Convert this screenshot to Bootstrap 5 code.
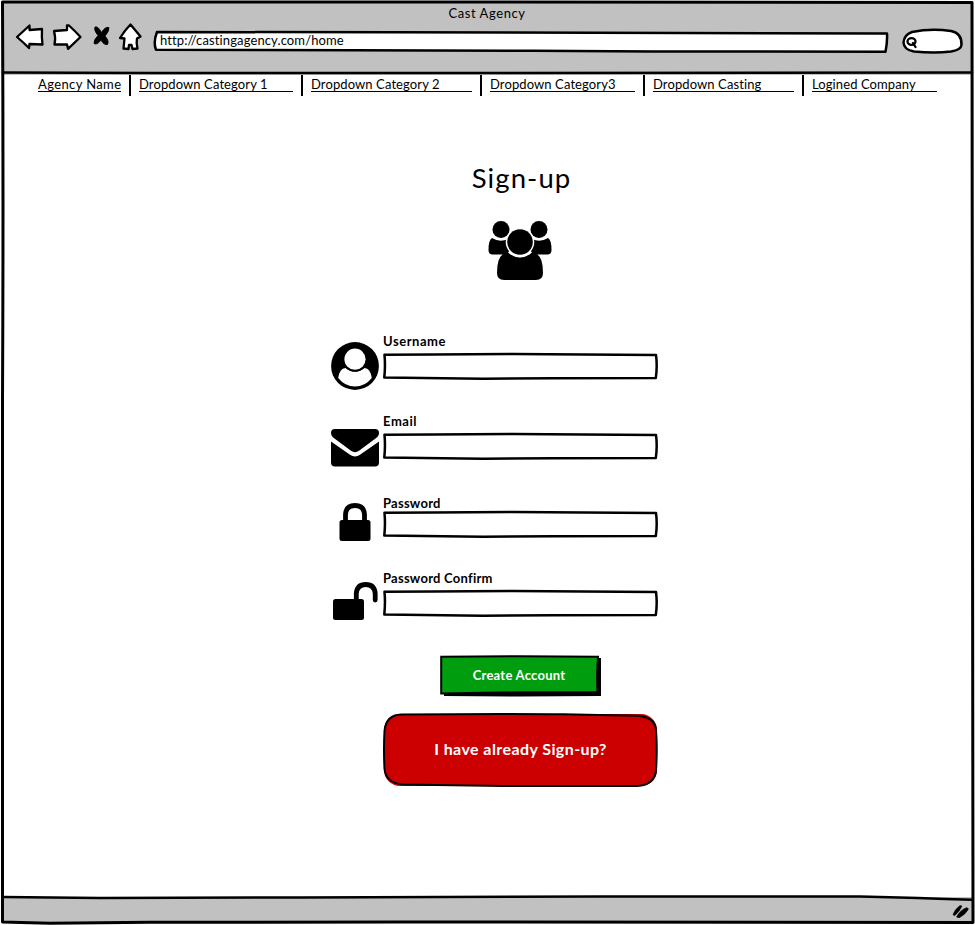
<!DOCTYPE html>
<html lang="en">
<head>
<meta charset="utf-8">
<meta name="viewport" content="width=device-width, initial-scale=1">
<title>Cast Agency</title>
<link href="https://cdn.jsdelivr.net/npm/bootstrap@5.3.0/dist/css/bootstrap.min.css" rel="stylesheet">
<style>
body{font-family:Lato,"Noto Sans",sans-serif;color:#000;font-size:13px;line-height:16px;background:#fff}
svg{display:block}
.window{width:975px;height:925px;overflow:hidden}
.frame{inset:0;pointer-events:none}
.outline{inset:0;width:100%;height:100%;pointer-events:none;overflow:visible}
.stroke-sketch{fill:none;stroke:#000;stroke-width:2.5;stroke-linejoin:round;stroke-linecap:round}
.stroke-sketch.filled{fill:#fff}
.chrome{height:73px;margin:2px 2px 0;background:#c1c1c1}
.chrome-title{height:23px;padding-top:3px;padding-right:1px;letter-spacing:.58px}
.chrome-tools{height:32px;padding-left:12px}
.toolbar-icons{margin-bottom:6px}
.address{width:735px;height:23px;margin-left:9px;padding:2px 0 0 7px;letter-spacing:.12px}
.search-pill{width:61px;height:26px;margin-left:14px}
.site-nav{height:22px;padding-left:38px}
.site-nav a{color:#000;height:17px;line-height:16px;padding-top:1px;border-bottom:1px solid #000;white-space:nowrap;letter-spacing:.1px}
.site-nav a.wide{letter-spacing:.38px}
.site-nav .sep{width:2px;height:21px;background:#000;margin:0 8px}
.content{width:327px;margin-left:331px;padding-top:63px}
.centered{padding-left:52px}
.page-title{font-size:27.5px;line-height:36px;letter-spacing:1.1px;font-weight:400;padding-left:2px}
.field-icon{width:48px;margin-right:4px}
.field-row{height:46px}
.field-label{height:19px;line-height:15px;font-weight:700;letter-spacing:.55px}
.field-label.tight{letter-spacing:.25px}
.field-box{width:275px;height:27px}
.field-box input{width:100%;height:100%;outline:0}
.btn-create{width:161px;height:42px;color:#fff;font-weight:700;font-size:13px;letter-spacing:.25px;padding:0 3px 2px 0}
.btn-have{width:275px;height:74px;color:#fff;font-weight:700;font-size:16px;letter-spacing:.42px;padding:0 0 2px}
.status{height:25px;background:#c1c1c1;margin:0 2px 3px}
</style>
</head>
<body>
<div class="window position-relative d-flex flex-column">
  <header class="chrome flex-shrink-0">
    <div class="chrome-title text-center">Cast Agency</div>
    <div class="chrome-tools d-flex align-items-center">
      <svg class="toolbar-icons" width="130" height="32" viewBox="14 22 130 32">
        <g fill="#fff" stroke="#000" stroke-width="2.3" stroke-linejoin="round">
          <path d="M17 37 L29.500 25.500 L29.500 30 L42 29 Q41.500 37 42.500 44.500 L29.500 44 L29 48 Q24 43 17 37Z"/>
          <path d="M54 31 L67 30 L67 25.500 L69 25.500 Q75 31 80.500 37 L68 48.800 L67 44.500 L54.500 44.500 Q56 38 54 31Z"/>
          <path d="M130.500 24.500 L140.500 36.500 L137 38.500 Q136 43 137.500 48.500 L132.500 49 L131.500 45 L129 45 L128.500 49 L123.500 48.500 L124.500 38.500 L120 38 Q125 30 130.500 24.500Z"/>
        </g>
        <path stroke="#000" stroke-width=".8" stroke-linejoin="round" d="M95 27 Q98 26 101.500 32.500 Q105 26.500 109 27.500 Q109.500 31 105 36 Q109.500 41 107.500 44.500 Q104 45.500 101 40 Q97 45.500 94 43.500 Q93.500 40 98 35.500 Q93.500 30 95 27Z"/>
      </svg>
      <div class="address position-relative">
        <svg class="outline position-absolute" viewBox="0 0 735 23" preserveAspectRatio="none"><path class="stroke-sketch filled" d="M4 2 L240 2.300 L734 3.500 Q734.500 12 732.500 21.700 L500 21.500 L380 20.700 L200 20.300 L3 19.700 Q0 12 4 2Z"/></svg>
        <span class="position-relative">http://castingagency.com/home</span>
      </div>
      <div class="search-pill position-relative">
        <svg class="outline position-absolute" viewBox="0 0 61 26"><path class="stroke-sketch filled" d="M10 4 Q29 0 49 3 Q60 5 59.500 17 Q59 22 49 23.500 Q33 25.500 12 23.500 Q2 22 1.500 14.500 Q2 7 10 4Z"/><g fill="none" stroke="#000" stroke-width="2.300" stroke-linecap="round"><ellipse cx="9.500" cy="13.500" rx="4" ry="3.300"/><path d="M11 15 L13.500 19"/></g></svg>
      </div>
    </div>
  </header>

  <nav class="site-nav d-flex flex-shrink-0">
    <a href="#" class="wide text-decoration-none" style="width:83px">Agency Name</a><span class="sep"></span>
    <a href="#" class="text-decoration-none" style="width:154px">Dropdown Category 1</a><span class="sep"></span>
    <a href="#" class="text-decoration-none" style="width:161px">Dropdown Category 2</a><span class="sep"></span>
    <a href="#" class="text-decoration-none" style="width:145px">Dropdown Category3</a><span class="sep"></span>
    <a href="#" class="text-decoration-none" style="width:141px">Dropdown Casting</a><span class="sep"></span>
    <a href="#" class="text-decoration-none" style="width:125px">Logined Company</a>
  </nav>

  <main class="content flex-grow-1">
    <div class="centered d-flex flex-column align-items-center">
      <h1 class="page-title m-0">Sign-up</h1>
      <svg width="66" height="60" viewBox="488 220 66 60" style="margin-top:24px">
        <circle cx="501" cy="229.500" r="8.500"/><circle cx="539" cy="229.500" r="8.500"/>
        <path d="M492 238 Q500 243 508 239 L512 246 L509 254.500 L492 254.500 Q488.500 254 488.500 250 Q488.500 240 492 238Z"/>
        <path d="M548 238 Q540 243 532 239 L528 246 L531 254.500 L548 254.500 Q551.500 254 551.500 250 Q551.500 240 548 238Z"/>
        <circle cx="520" cy="242" r="14.300" fill="#fff"/>
        <path d="M508 252.500 Q520 262 532 252.500 Q543 253 543 273 Q543 280 536 280 L504 280 Q497 280 497 273 Q497 253 508 252.500Z"/>
        <path d="M508 252.500 Q520 262.500 532 252.500 L529 249 L511 249Z" fill="#fff"/>
        <circle cx="520" cy="242" r="12.800"/>
      </svg>
    </div>

    <form>
      <div class="field-row d-flex align-items-start" style="margin-top:54px">
        <svg class="field-icon" style="margin-top:8px" height="48" viewBox="0 0 48 48"><circle cx="24" cy="24" r="23.900"/><path fill="#fff" d="M14.500 26 Q8.500 26.500 7.200 36 Q14 44.500 24 44.500 Q34 44.500 40.800 36 Q39.500 26.500 33.500 26 Q24 33.500 14.500 26Z"/><circle cx="24" cy="17.500" r="12.200"/><circle cx="24" cy="17.200" r="10.600" fill="#fff"/></svg>
        <div><label class="field-label d-block" for="user">Username</label>
          <div class="field-box position-relative"><input id="user" class="border-0 bg-transparent"><svg class="outline position-absolute" viewBox="0 0 275 27"><path class="stroke-sketch" d="M1.500 1.800 L50 1.500 L130 1 L200 1.600 L273 2 Q274.500 13 272.800 25 L170 25.300 L100 25.700 L60 25.200 L1.300 24.500 Q2.500 13 1.500 1.800Z"/></svg></div></div>
      </div>
      <div class="field-row d-flex align-items-start" style="margin-top:34px">
        <svg class="field-icon" style="margin-top:15px" height="38" viewBox="0 0 48 38"><path d="M4 0H44Q48 0 48 4Q48 7 44.500 9.500L28 21.800Q24 24.500 20 21.800L3.500 9.500Q0 7 0 4Q0 0 4 0Z"/><path d="M0 12.500L19 25.800Q24 29.300 29 25.800L48 12.500V33.500Q48 37.500 44 37.500H4Q0 37.500 0 33.500Z"/></svg>
        <div><label class="field-label d-block" for="mail">Email</label>
          <div class="field-box position-relative"><input id="mail" class="border-0 bg-transparent"><svg class="outline position-absolute" viewBox="0 0 275 27"><path class="stroke-sketch" d="M1.500 1.800 L50 1.500 L130 1 L200 1.600 L273 2 Q274.500 13 272.800 25 L170 25.300 L100 25.700 L60 25.200 L1.300 24.500 Q2.500 13 1.500 1.800Z"/></svg></div></div>
      </div>
      <div class="field-row d-flex align-items-start" style="margin-top:32px">
        <svg class="field-icon" style="margin-top:11px" height="38" viewBox="0 0 48 38"><rect x="8.500" y="17" width="31" height="21" rx="2.500"/><path fill="none" stroke="#000" stroke-width="4.800" d="M14.500 19V11.500Q15 2.500 24 2.500Q33 2.500 33.500 11.500V19"/></svg>
        <div><label class="field-label tight d-block" style="padding-top:4px" for="pass">Password</label>
          <div class="field-box position-relative"><input id="pass" type="password" class="border-0 bg-transparent"><svg class="outline position-absolute" viewBox="0 0 275 27"><path class="stroke-sketch" d="M1.500 1.800 L50 1.500 L130 1 L200 1.600 L273 2 Q274.500 13 272.800 25 L170 25.300 L100 25.700 L60 25.200 L1.300 24.500 Q2.500 13 1.500 1.800Z"/></svg></div></div>
      </div>
      <div class="field-row d-flex align-items-start" style="margin-top:33px">
        <svg class="field-icon" style="margin-top:11px" height="38" viewBox="0 0 48 38"><rect x="2" y="17" width="31" height="21" rx="2.500"/><path fill="none" stroke="#000" stroke-width="4.800" stroke-linecap="round" d="M25.300 19V11.500Q26 2.500 34.800 2.500Q43.500 2.500 44.200 11.500V18"/></svg>
        <div><label class="field-label tight d-block" for="confirm">Password Confirm</label>
          <div class="field-box position-relative"><input id="confirm" type="password" class="border-0 bg-transparent"><svg class="outline position-absolute" viewBox="0 0 275 27"><path class="stroke-sketch" d="M1.500 1.800 L50 1.500 L130 1 L200 1.600 L273 2 Q274.500 13 272.800 25 L170 25.300 L100 25.700 L60 25.200 L1.300 24.500 Q2.500 13 1.500 1.800Z"/></svg></div></div>
      </div>
      <div class="centered d-flex flex-column align-items-center" style="margin-top:38px">
        <button type="button" class="btn-create position-relative border-0 bg-transparent">
          <svg class="outline position-absolute" viewBox="0 0 161 42"><path d="M4 38H157V3H161V41L80 41.500L4 41Z"/><path fill="#009e0f" stroke="#000" stroke-width="2" d="M1.200 1.800L80 1.200L158 1.800Q156.500 20 157.500 37L80 37.200L1.200 38.500Z"/></svg>
          <span class="position-relative">Create Account</span>
        </button>
        <button type="button" class="btn-have position-relative border-0 bg-transparent" style="margin-top:16px">
          <svg class="outline position-absolute" viewBox="0 0 275 74"><rect x="1" y="1" width="273" height="72" rx="16" fill="#c00"/><path class="stroke-sketch" style="stroke-width:2" d="M18 1.500Q120 .5 180 1.300L252 2.800Q272 3 273 17Q274.500 36 273 57Q272 72 254 73L120 73L20 71.500Q3 70 1.500 56Q.5 36 1.500 18Q3 2 18 1.500Z"/></svg>
          <span class="position-relative">I have already Sign-up?</span>
        </button>
      </div>
    </form>
  </main>

  <footer class="status flex-shrink-0 d-flex justify-content-end align-items-center pe-1">
    <svg width="18" height="16" viewBox="0 0 18 16"><path stroke="#000" stroke-width=".5" d="M2 13Q3 8 9 3.500L11 4Q9 9 4 13.500Z M5.500 15Q9 8 16 5.500L17.500 7Q15 12 8 16Z"/></svg>
  </footer>

  <svg class="frame position-absolute" width="975" height="925" viewBox="0 0 975 925">
    <path class="stroke-sketch" style="stroke-width:3" d="M2.500 2L500 2L972 2.500Q971.500 300 972.500 500T973 922.500L400 922L150 922.300L50 923.200L2.500 922Q1.500 600 2.500 400T2.500 2Z"/>
    <path class="stroke-sketch" d="M3 72.500L150 73L500 73L972 72.500M3 897L100 898L300 897.500L600 896.500L860 896.500Q920 898 972 899.800"/>
  </svg>
</div>
<script src="https://cdn.jsdelivr.net/npm/bootstrap@5.3.0/dist/js/bootstrap.bundle.min.js"></script>
</body>
</html>
